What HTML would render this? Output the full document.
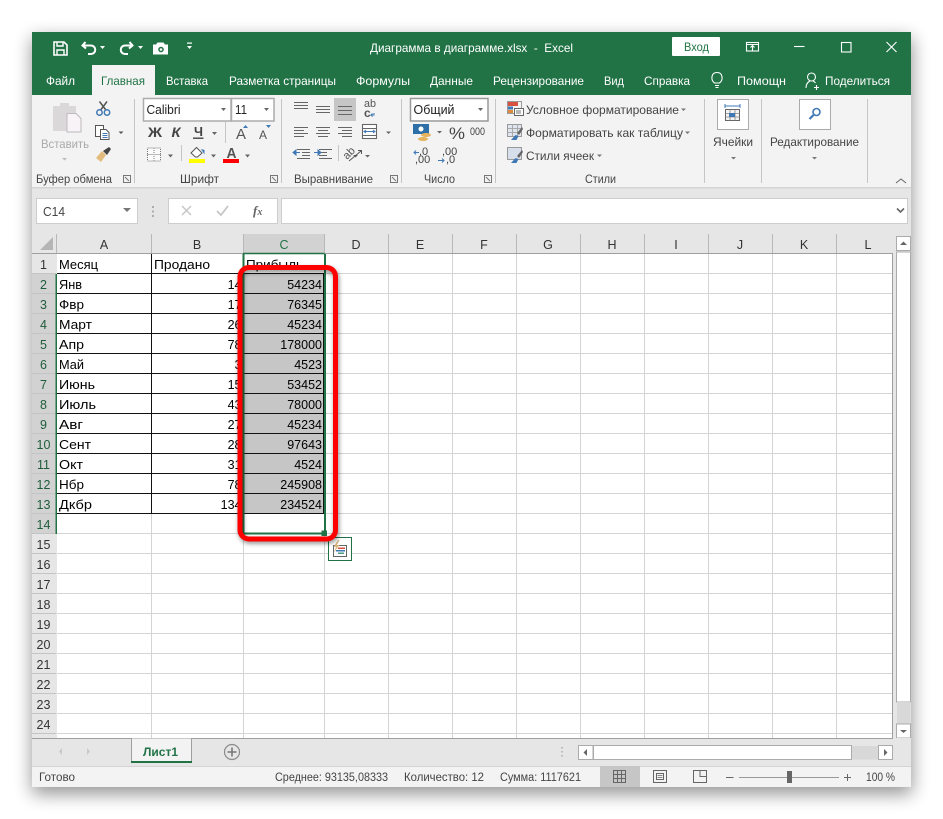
<!DOCTYPE html>
<html><head><meta charset="utf-8"><style>
html,body{margin:0;padding:0;background:#fff;width:943px;height:819px;overflow:hidden}
svg{display:block;font-family:"Liberation Sans","Noto Sans CJK SC",sans-serif;font-size:12px}
.c{font-size:13px;fill:#000}.h{font-size:12.5px;fill:#333}.s{fill:#217346}.w{fill:#fff}.r{fill:#444}
</style></head><body>
<svg width="943" height="819" viewBox="0 0 943 819" xmlns="http://www.w3.org/2000/svg">
<defs>
<filter id="b" x="-10%" y="-10%" width="120%" height="120%"><feGaussianBlur stdDeviation="9"/></filter>
<filter id="b2" x="-20%" y="-20%" width="140%" height="140%"><feGaussianBlur stdDeviation="2.5"/></filter>
</defs>
<rect x="32" y="38" width="880" height="756" fill="#000" opacity=".42" filter="url(#b)"/>
<rect x="32" y="32" width="879" height="755" fill="#e6e6e6"/>
<!-- title -->
<rect x="32" y="32" width="879" height="63" fill="#217346"/>
<g fill="none" stroke="#fff" stroke-width="1.600">
<path d="M54 42h10l3 3v10H54z"/><path d="M57 42v4h6v-4M57 55v-5h7v5" stroke-width="1.400"/>
<path d="M85.500 42l-3 3.500 3.500 3M82.500 45.500h8.500a4 4 0 0 1 0 8.500h-3" stroke-width="2"/>
<path d="M129.500 42l3 3.500-3.500 3M132.500 45.500h-7.500a4 4 0 0 0 0 8.500h3" stroke-width="2"/>
</g>
<g fill="#fff"><path d="M100 46h5l-2.500 3zM138 46h5l-2.500 3zM187 46h5l-2.500 3z"/><rect x="187" y="42.500" width="5" height="1.200"/>
<path d="M153 44.500h3l1.500-2h6l1.500 2h3v10h-15z"/></g>
<circle cx="161" cy="49.500" r="2.800" fill="#217346"/><circle cx="161" cy="49.500" r="1.300" fill="#fff"/>
<text class="w" x="370" y="52" textLength="203" lengthAdjust="spacingAndGlyphs" xml:space="preserve">Диаграмма в диаграмме.xlsx  -  Excel</text>
<rect x="672" y="37" width="48" height="19" rx="1" fill="#fff"/>
<text class="s" x="684" y="51" textLength="25" lengthAdjust="spacingAndGlyphs">Вход</text>
<g fill="none" stroke="#fff" stroke-width="1.100">
<rect x="746.500" y="42.500" width="12" height="8.500"/><path d="M746.500 44.500h12M752.500 50.500v-4.500M750.500 47.500l2-2 2 2"/>
<path d="M794 46.500h10.500"/><rect x="841.500" y="42.500" width="9.500" height="9.500"/><path d="M886.500 42l10 10M896.500 42l-10 10"/>
</g>
<g class="w" fill="#fff">
<text x="46" y="85" textLength="29" lengthAdjust="spacingAndGlyphs">Файл</text>
<text x="166" y="85" textLength="42" lengthAdjust="spacingAndGlyphs">Вставка</text>
<text x="229" y="85" textLength="107" lengthAdjust="spacingAndGlyphs">Разметка страницы</text>
<text x="356" y="85" textLength="54" lengthAdjust="spacingAndGlyphs">Формулы</text>
<text x="430" y="85" textLength="43" lengthAdjust="spacingAndGlyphs">Данные</text>
<text x="493" y="85" textLength="91" lengthAdjust="spacingAndGlyphs">Рецензирование</text>
<text x="604" y="85" textLength="20" lengthAdjust="spacingAndGlyphs">Вид</text>
<text x="644" y="85" textLength="46" lengthAdjust="spacingAndGlyphs">Справка</text>
<text x="737" y="85" textLength="49" lengthAdjust="spacingAndGlyphs">Помощн</text>
<text x="825" y="85" textLength="65" lengthAdjust="spacingAndGlyphs">Поделиться</text>
</g>
<g fill="none" stroke="#fff" stroke-width="1.100">
<path d="M714.500 83c-4-3-3.500-10.500 2.500-10.500s6.500 7.500 2.500 10.500zM715 85.500h4M715.500 87.500h3"/>
<circle cx="811.500" cy="77" r="4"/><path d="M806 88c0-4 2-6 4-7M813 81c1 .5 2 1 2.500 2M814 87.500h5M816.500 85v5"/>
</g>
<!-- ribbon -->
<rect x="92" y="65" width="63" height="30" fill="#f3f3f3"/>
<text class="s" x="101" y="85" textLength="44" lengthAdjust="spacingAndGlyphs">Главная</text>
<rect x="32" y="95" width="879" height="92" fill="#f3f3f3"/>
<rect x="32" y="187" width="879" height="1.500" fill="#d4d4d4"/>
<g fill="#c6c6c6"><rect x="134" y="99" width="1" height="84"/><rect x="281" y="99" width="1" height="84"/><rect x="401" y="99" width="1" height="84"/><rect x="495" y="99" width="1" height="84"/><rect x="704" y="99" width="1" height="84"/><rect x="761" y="99" width="1" height="84"/><rect x="867" y="99" width="1" height="84"/></g>
<!-- clipboard -->
<path d="M53 106h7v-3h9v3h7v25H53z" fill="#dbd8da"/><path d="M67 113.500h9l5 5v13.500h-14z" fill="#f7f3f7" stroke="#bdb9bc"/>
<text x="41" y="148" fill="#a9a9a9" textLength="48" lengthAdjust="spacingAndGlyphs">Вставить</text>
<path d="M62 158h5l-2.500 2.500z" fill="#bbb"/>
<g fill="none" stroke="#3f78b4" stroke-width="1.500"><circle cx="99.500" cy="112.500" r="2.700"/><circle cx="107" cy="112.500" r="2.700"/></g>
<path d="M99.500 101.500l6 8M107 101.500l-6 8" stroke="#555" stroke-width="1.500" fill="none"/>
<g fill="#fff" stroke="#555"><rect x="95.500" y="125.500" width="8" height="11"/><path d="M100.500 129.500h5.500l3 3v7h-8.500z"/></g>
<path d="M102.500 133.500h5M102.500 135.500h5M102.500 137.500h5" stroke="#3f78b4"/>
<path d="M118.500 131.500h5l-2.500 2.500z" fill="#555"/>
<path d="M96 158l6-7 4 4-5 7z" fill="#e3bc7d"/><path d="M103 151l6-4 2 2-4 6z" fill="#444"/>
<!-- font -->
<rect x="143.500" y="98.500" width="87.500" height="22.500" fill="#fff" stroke="#ababab" stroke-width="1.500"/>
<rect x="231.500" y="98.500" width="42.500" height="22.500" fill="#fff" stroke="#ababab" stroke-width="1.500"/>
<text x="146.500" y="114" fill="#222" style="font-size:13px" textLength="34" lengthAdjust="spacingAndGlyphs">Calibri</text>
<text x="235" y="114" fill="#222" style="font-size:13px" textLength="12" lengthAdjust="spacingAndGlyphs">11</text>
<g fill="#666"><path d="M221 108h5l-2.500 3zM264 108h5l-2.500 3zM212 132h5l-2.500 3zM168 154.500h5l-2.500 3zM211 154.500h5l-2.500 3zM245 154.500h5l-2.500 3z"/></g>
<text x="148" y="137" fill="#444" font-weight="700" style="font-size:14px" textLength="14" lengthAdjust="spacingAndGlyphs">Ж</text>
<text x="171.500" y="137" fill="#444" font-weight="700" font-style="italic" style="font-size:14px" textLength="9" lengthAdjust="spacingAndGlyphs">К</text>
<text x="194" y="136" fill="#444" font-weight="700" style="font-size:13px" textLength="9" lengthAdjust="spacingAndGlyphs">Ч</text>
<rect x="193" y="137.500" width="10.500" height="1.400" fill="#444"/>
<rect x="225" y="122" width="1" height="21" fill="#c6c6c6"/>
<text x="236" y="139" fill="#555" style="font-size:15px" textLength="10" lengthAdjust="spacingAndGlyphs">А</text>
<text x="259" y="139" fill="#555" style="font-size:12px" textLength="8" lengthAdjust="spacingAndGlyphs">А</text>
<path d="M243 128l2.500-3 2.500 3zM266 125h5l-2.500 3z" fill="#3f78b4"/>
<rect x="147.500" y="148" width="13" height="13" fill="#fbfbfb" stroke="#777" stroke-dasharray="1 1"/>
<path d="M154 148v13M147.500 154.500h13" stroke="#777" stroke-dasharray="1 1"/>
<rect x="181" y="145" width="1" height="16" fill="#c6c6c6"/>
<path d="M191 153l5.500-5.500 5.500 5.500-4.500 4h-2z" fill="#fff" stroke="#555"/><path d="M201 149l3.500 1 0 4.500z" fill="#3f78b4"/>
<rect x="189" y="159" width="16" height="4" fill="#ffff00"/>
<text x="226.500" y="158" fill="#555" style="font-size:15px" font-weight="700" textLength="10" lengthAdjust="spacingAndGlyphs">А</text>
<rect x="223" y="159" width="16" height="4" fill="#f00"/>
<!-- align -->
<g stroke="#666" stroke-width="1.100" fill="none">
<path d="M294 102.500h14M294 105.500h14M294 108.500h14"/>
<path d="M316 106.500h14M316 109.500h14M316 112.500h14"/>
<path d="M294 127.500h14M294 130.500h10M294 133.500h14M294 136.500h10"/>
<path d="M316 127.500h14M318 130.500h10M316 133.500h14M318 136.500h10"/>
<path d="M338 127.500h14M342 130.500h10M338 133.500h14M342 136.500h10"/>
<path d="M297 149.500h13M302 152.500h8M302 155.500h8M297 158.500h13"/>
<path d="M319 149.500h13M319 152.500h8M319 155.500h8M319 158.500h13"/>
<rect x="362.500" y="124.500" width="14" height="14" fill="#fff" stroke="#666"/><path d="M362.500 128.500h14M362.500 135.500h14"/>
</g>
<rect x="334" y="98" width="22" height="23" fill="#c6c6c6"/>
<path d="M338 106.500h14M338 110.500h14M338 114.500h14" stroke="#666" stroke-width="1.100"/>
<path d="M365 131.500h9M366 130l-2 1.500 2 1.500M373 130l2 1.500-2 1.500" stroke="#3f78b4" fill="none"/>
<path d="M293 152.500h7M296 150l-3 2.500 3 2.500zM314 152.500h7M318 150l3 2.500-3 2.500z" stroke="#3f78b4" fill="#3f78b4"/>
<text x="364" y="107" fill="#555" style="font-size:11px" textLength="12" lengthAdjust="spacingAndGlyphs">ab</text>
<text x="364" y="117" fill="#555" style="font-size:12px" font-weight="700">c</text>
<path d="M374 113v2h-3l1.500-1.500M371 115l1.500 1.500" stroke="#3f78b4" fill="none"/>
<path d="M386 131.500h5l-2.500 2.500zM353 155h5l-2.500 2.500z" fill="#666"/>
<rect x="338" y="145" width="1" height="16" fill="#c6c6c6"/>
<text transform="translate(347,160) rotate(-45)" fill="#555" style="font-size:11px">ab</text>
<path d="M349 161l12-10M358 150.500h3.500v3.500" stroke="#555" fill="none"/>
<path d="M365 155h5l-2.500 2.500z" fill="#666"/>
<!-- number -->
<rect x="410.500" y="98.500" width="77.500" height="22.500" fill="#fff" stroke="#999" stroke-width="1.500"/>
<text x="413.500" y="114" fill="#222" style="font-size:13px" textLength="41" lengthAdjust="spacingAndGlyphs">Общий</text>
<path d="M478 108h5l-2.500 3z" fill="#666"/>
<rect x="413" y="124" width="16" height="10" fill="#2f6fa8"/><circle cx="421" cy="129" r="2.500" fill="#fff"/>
<ellipse cx="426" cy="135" rx="5" ry="2" fill="#e5b45c"/><ellipse cx="423" cy="139" rx="5" ry="2" fill="#e5b45c"/>
<path d="M437 131h5l-2.500 2.500z" fill="#666"/>
<text x="449" y="139" fill="#444" style="font-size:17px" textLength="16" lengthAdjust="spacingAndGlyphs">%</text>
<text x="470" y="135" fill="#444" style="font-size:11px" textLength="15" lengthAdjust="spacingAndGlyphs">000</text>
<text x="419" y="155" fill="#444" style="font-size:11px">,0</text><text x="415" y="163" fill="#444" style="font-size:11px">,00</text>
<path d="M414 152.500h5M416 150.500l-2 2 2 2" stroke="#3f78b4" fill="none"/>
<text x="442" y="155" fill="#444" style="font-size:11px">,00</text><text x="446" y="163" fill="#444" style="font-size:11px">,0</text>
<path d="M438 160.500h6M442 158.500l2 2-2 2" stroke="#3f78b4" fill="none"/>
<!-- styles -->
<g>
<rect x="507" y="102" width="11" height="4" fill="#d9503f"/><rect x="507" y="106.500" width="6" height="3" fill="#3f78b4"/><rect x="507" y="110" width="6" height="4" fill="#e08a3c"/>
<rect x="507.500" y="101.500" width="14" height="12" fill="none" stroke="#999"/>
<rect x="514.500" y="108.500" width="9" height="7" fill="#fff" stroke="#666"/><path d="M516 111h5M516 113h5" stroke="#444" stroke-width=".8"/>
<rect x="507.500" y="124.500" width="14" height="12" fill="#dfe6ef" stroke="#999"/><path d="M507.500 128.500h14M507.500 132.500h14M512.500 124.500v12M517.500 124.500v12" stroke="#aaa"/>
<path d="M511 140l4.500-5 3 1-2 4z" fill="#3f78b4"/><path d="M517 133l5-6 1 2-4 6z" fill="#666"/>
<rect x="507.500" y="147.500" width="14" height="12" fill="#d6dfea" stroke="#999"/>
<path d="M511 163l4.500-5 3 1-2 4z" fill="#3f78b4"/><path d="M517 156l5-6 1 2-4 6z" fill="#666"/>
</g>
<text x="526" y="114" fill="#444" textLength="153" lengthAdjust="spacingAndGlyphs">Условное форматирование</text>
<text x="526" y="137" fill="#444" textLength="157" lengthAdjust="spacingAndGlyphs">Форматировать как таблицу</text>
<text x="526" y="160" fill="#444" textLength="68" lengthAdjust="spacingAndGlyphs">Стили ячеек</text>
<path d="M681 108.500h5l-2.500 2.500zM685 131.500h5l-2.500 2.500zM597 154.500h5l-2.500 2.500z" fill="#777"/>
<!-- cells / edit -->
<rect x="717.500" y="99.500" width="31" height="30" fill="#fff" stroke="#ababab"/>
<rect x="725.500" y="109.500" width="14" height="11" fill="#f3f3f3" stroke="#666"/><path d="M725.500 113.500h14M725.500 117h14M730 109.500v11M735 109.500v11" stroke="#888" stroke-width=".8"/>
<rect x="729" y="113" width="6" height="4" fill="#3f78b4"/><path d="M725 106h15M725 104v4M740 104v4" stroke="#3f78b4"/>
<text x="713" y="146" fill="#444" textLength="40" lengthAdjust="spacingAndGlyphs">Ячейки</text>
<path d="M731 157h5l-2.500 2.500zM812 157h5l-2.500 2.500z" fill="#777"/>
<rect x="799.500" y="99.500" width="31" height="30" fill="#fff" stroke="#ababab"/>
<circle cx="816.500" cy="112" r="3.500" fill="#fff" stroke="#3f78b4" stroke-width="1.600"/><path d="M813.500 115l-4 4" stroke="#3f78b4" stroke-width="2.200"/>
<text x="770" y="146" fill="#444" textLength="89" lengthAdjust="spacingAndGlyphs">Редактирование</text>
<path d="M896 183l5-4 5 4" stroke="#666" fill="none"/>
<!-- group labels -->
<g fill="#444">
<text x="36" y="183" textLength="76" lengthAdjust="spacingAndGlyphs">Буфер обмена</text>
<text x="180" y="183" textLength="39" lengthAdjust="spacingAndGlyphs">Шрифт</text>
<text x="294" y="183" textLength="79" lengthAdjust="spacingAndGlyphs">Выравнивание</text>
<text x="424" y="183" textLength="31" lengthAdjust="spacingAndGlyphs">Число</text>
<text x="585" y="183" textLength="31" lengthAdjust="spacingAndGlyphs">Стили</text>
</g>
<g fill="none" stroke="#777"><path d="M123.500 175.500h7v7h-7zM270.500 175.500h7v7h-7zM390.500 175.500h7v7h-7zM484.500 175.500h7v7h-7z"/><path d="M125 177l4 4M272 177l4 4M392 177l4 4M486 177l4 4"/></g>
<!-- formula bar -->
<rect x="36.500" y="198.500" width="101" height="25" fill="#fff" stroke="#cdcdcd"/>
<text x="43" y="216" fill="#444" style="font-size:12.500px" textLength="22" lengthAdjust="spacingAndGlyphs">C14</text>
<path d="M123 208h8l-4 4z" fill="#777"/>
<path d="M153 206v2M153 210.500v2M153 215v2" stroke="#999" stroke-width="1.500"/>
<rect x="168.500" y="198.500" width="109" height="25" fill="#fff" stroke="#cdcdcd"/>
<path d="M182 206l9 9M191 206l-9 9" stroke="#c6c6c6" stroke-width="1.500"/>
<path d="M217 211l4 4 7-9" stroke="#c6c6c6" stroke-width="1.800" fill="none"/>
<text x="253" y="215" fill="#666" font-family="Liberation Serif" font-style="italic" font-weight="700" style="font-size:13px">f<tspan style="font-size:10px">x</tspan></text>
<rect x="281.500" y="198.500" width="626" height="25" fill="#fff" stroke="#cdcdcd"/>
<path d="M897 208.500l3.500 3.500 3.500-3.500" stroke="#666" stroke-width="1.600" fill="none"/>
<!-- grid -->
<rect x="57" y="254" width="836" height="484" fill="#fff"/>
<rect x="32" y="254" width="25" height="484" fill="#e6e6e6"/>
<rect x="32" y="274" width="24" height="260" fill="#d2d2d2"/>
<rect x="243" y="234" width="81" height="19" fill="#d2d2d2"/>
<path d="M53 237v13H40z" fill="#b5b5b5"/>
<g stroke="#b8b8b8"><path d="M56.500 234v20M151.500 234v20M243.500 234v20M324.500 234v20M388.500 234v20M452.500 234v20M516.500 234v20M580.500 234v20M644.500 234v20M708.500 234v20M772.500 234v20M836.500 234v20"/></g>
<path d="M32 253.500h861M892.500 253v485" stroke="#9f9f9f"/>
<g stroke="#d4d4d4">
<path d="M151.500 514v224M243.500 514v224M324.500 254v484M388.500 254v484M452.500 254v484M516.500 254v484M580.500 254v484M644.500 254v484M708.500 254v484M772.500 254v484M836.500 254v484"/>
<path d="M57 273.500h835M57 293.500h835M57 313.500h835M57 333.500h835M57 353.500h835M57 373.500h835M57 393.500h835M57 413.500h835M57 433.500h835M57 453.500h835M57 473.500h835M57 493.500h835M57 513.500h835M57 533.500h835M57 553.500h835M57 573.500h835M57 593.500h835M57 613.500h835M57 633.500h835M57 653.500h835M57 673.500h835M57 693.500h835M57 713.500h835M57 733.500h835"/>
<path d="M32 273.500h24M32 293.500h24M32 313.500h24M32 333.500h24M32 353.500h24M32 373.500h24M32 393.500h24M32 413.500h24M32 433.500h24M32 453.500h24M32 473.500h24M32 493.500h24M32 513.500h24M32 533.500h24M32 553.500h24M32 573.500h24M32 593.500h24M32 613.500h24M32 633.500h24M32 653.500h24M32 673.500h24M32 693.500h24M32 713.500h24M32 733.500h24" stroke="#c4c4c4"/>
</g>
<rect x="244" y="274" width="79" height="240" fill="#c6c6c6"/>
<path d="M57 273.500h267M57 293.500h267M57 313.500h267M57 333.500h267M57 353.500h267M57 373.500h267M57 393.500h267M57 413.500h267M57 433.500h267M57 453.500h267M57 473.500h267M57 493.500h267M57 513.500h267M151.500 254v260M243.500 254v260M323.500 274v240" stroke="#111" fill="none"/>
<g class="h" text-anchor="middle">
<text x="104" y="249">A</text><text x="197" y="249">B</text><text x="284" y="249" class="s">C</text><text x="356" y="249">D</text><text x="420" y="249">E</text><text x="484" y="249">F</text><text x="548" y="249">G</text><text x="612" y="249">H</text><text x="676" y="249">I</text><text x="740" y="249">J</text><text x="804" y="249">K</text><text x="868" y="249">L</text>
</g>
<g class="h" text-anchor="middle">
<text x="43.500" y="269">1</text>
<g style="fill:#1e5c3a"><text x="43.500" y="289">2</text><text x="43.500" y="309">3</text><text x="43.500" y="329">4</text><text x="43.500" y="349">5</text><text x="43.500" y="369">6</text><text x="43.500" y="389">7</text><text x="43.500" y="409">8</text><text x="43.500" y="429">9</text><text x="43.500" y="449">10</text><text x="43.500" y="469">11</text><text x="43.500" y="489">12</text><text x="43.500" y="509">13</text><text x="43.500" y="529">14</text></g>
<text x="43.500" y="549">15</text><text x="43.500" y="569">16</text><text x="43.500" y="589">17</text><text x="43.500" y="609">18</text><text x="43.500" y="629">19</text><text x="43.500" y="649">20</text><text x="43.500" y="669">21</text><text x="43.500" y="689">22</text><text x="43.500" y="709">23</text><text x="43.500" y="729">24</text>
</g>
<g class="c">
<text x="59" y="269" textLength="39" lengthAdjust="spacingAndGlyphs">Месяц</text>
<text x="154" y="269" textLength="56" lengthAdjust="spacingAndGlyphs">Продано</text>
<text x="246" y="269" textLength="57" lengthAdjust="spacingAndGlyphs">Прибыль</text>
<text x="59" y="289" textLength="23" lengthAdjust="spacingAndGlyphs">Янв</text>
<text x="59" y="309" textLength="25" lengthAdjust="spacingAndGlyphs">Фвр</text>
<text x="59" y="329" textLength="33" lengthAdjust="spacingAndGlyphs">Март</text>
<text x="59" y="349" textLength="25" lengthAdjust="spacingAndGlyphs">Апр</text>
<text x="59" y="369" textLength="25" lengthAdjust="spacingAndGlyphs">Май</text>
<text x="59" y="389" textLength="36" lengthAdjust="spacingAndGlyphs">Июнь</text>
<text x="59" y="409" textLength="37" lengthAdjust="spacingAndGlyphs">Июль</text>
<text x="59" y="429" textLength="24" lengthAdjust="spacingAndGlyphs">Авг</text>
<text x="59" y="449" textLength="32" lengthAdjust="spacingAndGlyphs">Сент</text>
<text x="59" y="469" textLength="24" lengthAdjust="spacingAndGlyphs">Окт</text>
<text x="59" y="489" textLength="25" lengthAdjust="spacingAndGlyphs">Нбр</text>
<text x="59" y="509" textLength="33" lengthAdjust="spacingAndGlyphs">Дкбр</text>
</g>
<g class="c" style="font-size:12.500px" text-anchor="end">
<text x="241.500" y="289">14</text><text x="241.500" y="309">17</text><text x="241.500" y="329">26</text><text x="241.500" y="349">78</text><text x="241.500" y="369">3</text><text x="241.500" y="389">15</text><text x="241.500" y="409">43</text><text x="241.500" y="429">27</text><text x="241.500" y="449">28</text><text x="241.500" y="469">31</text><text x="241.500" y="489">78</text><text x="241.500" y="509">134</text>
<text x="322" y="289">54234</text><text x="322" y="309">76345</text><text x="322" y="329">45234</text><text x="322" y="349">178000</text><text x="322" y="369">4523</text><text x="322" y="389">53452</text><text x="322" y="409">78000</text><text x="322" y="429">45234</text><text x="322" y="449">97643</text><text x="322" y="469">4524</text><text x="322" y="489">245908</text><text x="322" y="509">234524</text>
</g>
<!-- selection -->
<path d="M243 253.500h81.500" stroke="#217346" stroke-width="1.500" fill="none"/>
<path d="M325 254v279.500H243M243.500 254v280" stroke="#217346" stroke-width="2" fill="none"/>
<rect x="55.500" y="274" width="1.500" height="260" fill="#217346"/>
<rect x="321.500" y="530.500" width="5.500" height="5.500" fill="#217346"/>
<!-- paste options -->
<rect x="328.500" y="537.500" width="23" height="23" fill="#fff" stroke="#217346"/>
<rect x="333.500" y="545.500" width="13" height="11" fill="#fff" stroke="#666"/>
<path d="M338 540l-4.500 7h2.500l-2.500 6 6-8h-2.500l2.500-5z" fill="#d8b77e"/>
<rect x="338" y="547.500" width="7" height="1.500" fill="#d9503f"/><rect x="336" y="550" width="9" height="1.500" fill="#3f78b4"/><rect x="338" y="552.500" width="6" height="1.500" fill="#4e9c80"/>
<!-- red frame -->
<rect x="240" y="268" width="95.500" height="271" rx="9" fill="none" stroke="#000" stroke-width="5" opacity=".45" filter="url(#b2)" transform="translate(1,2)"/>
<rect x="240" y="267.500" width="95.500" height="271.500" rx="9" fill="none" stroke="#f00" stroke-width="5"/>
<!-- scrollbar -->
<rect x="893" y="234" width="18" height="504" fill="#e6e6e6"/>
<rect x="896.500" y="236.500" width="14" height="14" fill="#fff" stroke="#ababab"/>
<path d="M900 245l3.500-3.500 3.500 3.500z" fill="#666"/>
<rect x="896.500" y="252" width="14" height="450" fill="#fff" stroke="#ababab"/>
<rect x="897" y="702" width="13.500" height="22" fill="#d8d8d8"/>
<rect x="896.500" y="724" width="14" height="14" fill="#fff" stroke="#ababab"/>
<path d="M900 730l3.500 3 3.500-3z" fill="#666"/>
<!-- tab bar -->
<rect x="32" y="738" width="879" height="28" fill="#e6e6e6"/>
<path d="M32 738.500h861" stroke="#9f9f9f"/>
<path d="M131.500 738.500v24h60v-24" fill="#f3f3f3" stroke="#9f9f9f"/>
<rect x="131" y="761" width="61" height="2" fill="#217346"/>
<text class="s" x="143" y="756" font-weight="700" textLength="35" lengthAdjust="spacingAndGlyphs">Лист1</text>
<path d="M62 748v7l-3-3.500zM87 748v7l3-3.500z" fill="#c9c9c9"/>
<circle cx="232" cy="752" r="7.500" fill="none" stroke="#8a8a8a" stroke-width="1.200"/><path d="M227.500 752h9M232 747.500v9" stroke="#777" stroke-width="1.600"/>
<path d="M562 747v1.500M562 751v1.500M562 755v1.500" stroke="#bbb" stroke-width="2"/>
<rect x="578.500" y="745.500" width="14.500" height="14" fill="#fff" stroke="#ababab"/><path d="M587 749v7l-3.500-3.500z" fill="#666"/>
<rect x="593.500" y="745.500" width="258" height="14" fill="#fff" stroke="#ababab"/>
<rect x="852" y="746" width="26" height="13.500" fill="#d8d8d8"/>
<rect x="878.500" y="745.500" width="14" height="14" fill="#fff" stroke="#ababab"/><path d="M884 749v7l3.500-3.500z" fill="#666"/>
<!-- status -->
<rect x="32" y="766" width="879" height="21" fill="#f3f3f3"/>
<path d="M32 766.500h879" stroke="#d4d4d4"/>
<g fill="#444" style="font-size:11.500px">
<text x="39" y="781" textLength="36" lengthAdjust="spacingAndGlyphs">Готово</text>
<text x="275" y="781" textLength="113" lengthAdjust="spacingAndGlyphs">Среднее: 93135,08333</text>
<text x="404" y="781" textLength="80" lengthAdjust="spacingAndGlyphs">Количество: 12</text>
<text x="500" y="781" textLength="81" lengthAdjust="spacingAndGlyphs">Сумма: 1117621</text>
<text x="866" y="781" textLength="29" lengthAdjust="spacingAndGlyphs">100 %</text>
</g>
<rect x="600" y="766" width="40" height="21" fill="#c6c6c6"/>
<g fill="none" stroke="#666">
<rect x="613.500" y="770.500" width="12" height="12"/><path d="M617.500 770.500v12M621.500 770.500v12M613.500 774.500h12M613.500 778.500h12"/>
<rect x="653.500" y="770.500" width="13" height="12"/><rect x="656.500" y="773.500" width="7" height="6"/><path d="M657.500 775.500h5M657.500 777.500h5" stroke-width=".8"/>
<path d="M693.500 770.500h13v12h-13zM700 770.500v6h6.500" />
<path d="M726 777.500h7.500M844 777.500h7M847.500 774v7"/>
</g>
<path d="M739 777.500h100" stroke="#999"/>
<rect x="787" y="771" width="5" height="12" fill="#666"/>
</svg>
</body></html>
